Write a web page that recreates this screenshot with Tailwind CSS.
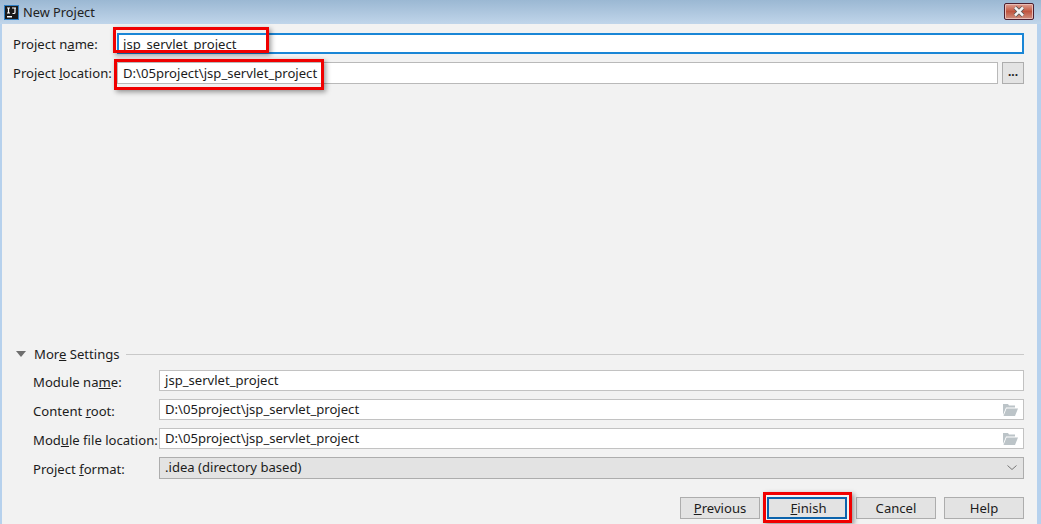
<!DOCTYPE html>
<html lang="en">
<head>
    <meta charset="UTF-8">
    <title>New Project</title>
    <script src="https://cdn.jsdelivr.net/npm/@tailwindcss/browser@4"></script>
</head>
<body class="w-[1041px] h-[524px] overflow-hidden relative bg-[#b6d1ed] font-['Noto_Sans',sans-serif] text-[13.1px] text-[#1c1c1c]">
    <!-- Title bar -->
    <div class="h-[24px] flex items-center pl-[4px] pr-[7px] bg-gradient-to-b from-[#9bb8d3] to-[#c0d5ea]">
        <svg width="15" height="15" viewBox="0 0 15 15" class="mr-[4px]">
            <rect x="0.500" y="0.500" width="14" height="14" fill="#1a1a1a" stroke="#2f7fc4" stroke-width="1"/>
            <path d="M3 3h3M4.500 3v5M3 8h3M8 3h4M11 3v4.500q0 1-1.200 1H8.500" fill="none" stroke="#fff" stroke-width="1.200"/>
            <rect x="3" y="11" width="5" height="1.500" fill="#fff"/>
        </svg>
        <span class="text-[12.800px] leading-none text-[#222]">New Project</span>
        <div class="ml-auto w-[30px] h-[17px] mb-[1px] flex items-center justify-center rounded-[2px] border border-[#4d1f2e] bg-gradient-to-b from-[#dfa093] via-[#c0553f] to-[#cf8f80] shadow-[inset_0_0_0_1px_#e8bdb6]">
            <svg width="14" height="11" viewBox="0 0 14 11">
                <path d="M3 1.500 11 9.500M11 1.500 3 9.500" stroke="#555" stroke-width="4"/>
                <path d="M3 1.500 11 9.500M11 1.500 3 9.500" stroke="#f4f4f4" stroke-width="2.500"/>
            </svg>
        </div>
    </div>

    <!-- Dialog content -->
    <div class="ml-[2px] mr-[4px] h-[500px] bg-[#f2f2f2] pt-[9px] pl-[11px] pr-[13px] flex flex-col">
        <div class="flex items-center h-[21px]">
            <label class="w-[104px] shrink-0 pt-[2px]">Project n<u>a</u>me:</label>
            <div class="flex-1 h-[21px] bg-white border-2 border-[#1a86d6] flex items-center pl-[4px] pt-[2px]">jsp_servlet_project</div>
        </div>
        <div class="flex items-center h-[22px] mt-[8px]">
            <label class="w-[104px] shrink-0 pt-[2px]">Project <u>l</u>ocation:</label>
            <div class="flex-1 h-[22px] bg-white border border-[#b9b9b9] flex items-center pl-[5px] pt-[2px]">D:\05project\jsp_servlet_project</div>
            <button class="ml-[4px] w-[22px] h-[22px] bg-[#e3e3e3] border border-[#adadad] flex items-center justify-center text-[12px] leading-none font-bold pb-[2px]">...</button>
        </div>

        <!-- More Settings -->
        <div class="mt-[260px] flex items-center h-[20px]">
            <svg width="10" height="6" viewBox="0 0 10 6" class="ml-[3px] mr-[8px]"><path d="M0 0h10L5 6z" fill="#6e6e6e"/></svg>
            <span class="pt-[2px]">Mor<u>e</u> Settings</span>
            <div class="flex-1 h-px bg-[#c9c9c9] ml-[6px]"></div>
        </div>
        <div class="pl-[20px] flex flex-col gap-[8px] mt-[6px]">
            <div class="flex items-center h-[21px]">
                <label class="w-[126px] shrink-0 pt-[5px]">Module na<u>m</u>e:</label>
                <div class="flex-1 h-[21px] bg-white border border-[#c2c2c2] flex items-center pl-[5px]">jsp_servlet_project</div>
            </div>
            <div class="flex items-center h-[21px]">
                <label class="w-[126px] shrink-0 pt-[5px]">Content <u>r</u>oot:</label>
                <div class="flex-1 h-[21px] bg-white border border-[#c2c2c2] flex items-center pl-[5px] pr-[5px]">
                    D:\05project\jsp_servlet_project
                    <svg width="16" height="12" viewBox="0 0 16 12" class="ml-auto"><path d="M1 0h5l1 1.500h6v2H4L1 11zM4.500 4.500H16L13 12H1.500z" fill="#bcc4c8"/></svg>
                </div>
            </div>
            <div class="flex items-center h-[21px]">
                <label class="w-[126px] shrink-0 pt-[5px]">Mod<u>u</u>le file location:</label>
                <div class="flex-1 h-[21px] bg-white border border-[#c2c2c2] flex items-center pl-[5px] pr-[5px]">
                    D:\05project\jsp_servlet_project
                    <svg width="16" height="12" viewBox="0 0 16 12" class="ml-auto"><path d="M1 0h5l1 1.500h6v2H4L1 11zM4.500 4.500H16L13 12H1.500z" fill="#bcc4c8"/></svg>
                </div>
            </div>
            <div class="flex items-center h-[22px]">
                <label class="w-[126px] shrink-0 pt-[3px]">Project <u>f</u>ormat:</label>
                <div class="flex-1 h-[22px] bg-[#e3e3e3] border border-[#adadad] flex items-center pl-[5px] pr-[5px]">
                    .idea (directory based)
                    <svg width="10" height="6" viewBox="0 0 10 6" class="ml-auto mr-[1px]"><path d="M.5.500 5 4.500 9.500.500" fill="none" stroke="#777" stroke-width="1"/></svg>
                </div>
            </div>
        </div>

        <!-- Buttons -->
        <div class="mt-[18px] flex justify-end">
            <button class="w-[80px] h-[22px] bg-[#e3e3e3] border border-[#adadad] leading-none pt-[1px]"><u>P</u>revious</button>
            <button class="ml-[7px] w-[80px] h-[22px] bg-[#e3e3e3] border-2 border-[#0b63ac] leading-none pt-[1px] pl-[3px]"><u>F</u>inish</button>
            <button class="ml-[9px] w-[80px] h-[22px] bg-[#e3e3e3] border border-[#adadad] leading-none pt-[1px]">Cancel</button>
            <button class="ml-[8px] w-[80px] h-[22px] bg-[#e3e3e3] border border-[#adadad] leading-none pt-[1px]">Help</button>
        </div>
    </div>

    <!-- Red annotation boxes -->
    <div class="absolute left-[113px] top-[27px] w-[156px] h-[26px] border-[3px] border-[#f00000] shadow-[2px_2px_5px_rgba(0,0,0,0.4)]"></div>
    <div class="absolute left-[114px] top-[59px] w-[210px] h-[31px] border-[3px] border-[#f00000] shadow-[2px_2px_5px_rgba(0,0,0,0.4)]"></div>
    <div class="absolute left-[763px] top-[492px] w-[89px] h-[31px] border-[3px] border-[#f00000] shadow-[2px_2px_5px_rgba(0,0,0,0.4)]"></div>
</body>
</html>
